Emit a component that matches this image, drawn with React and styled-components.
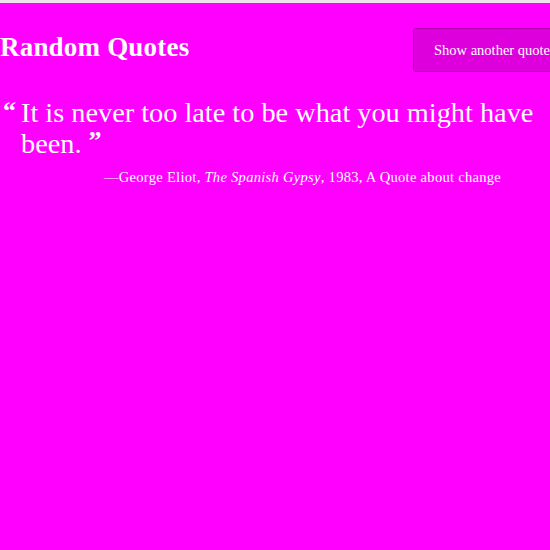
import React from 'react';
import styled, { createGlobalStyle } from 'styled-components';

const GlobalStyle = createGlobalStyle`
  html, body {
    margin: 0;
    padding: 0;
    background: #ff00ff;
    overflow: hidden;
  }
  body {
    font-family: "Liberation Serif", "DejaVu Serif", serif;
    color: #fff;
  }
`;

const TopStrip = styled.div`
  height: 3px;
  background: #ece4ec;
`;

const Page = styled.main`
  width: 571px;
  height: 547px;
  background: #ff00ff;
`;

const Header = styled.header`
  display: flex;
  justify-content: space-between;
  align-items: center;
  padding-top: 25px;
`;

const Title = styled.h1`
  margin: 0 0 6px;
  font-size: 27px;
  font-weight: 700;
  color: #fff;
  letter-spacing: 0.2px;
`;

const Button = styled.button`
  height: 44px;
  padding: 0 20px;
  background: #dd00dd;
  border: 1px solid #b300b3;
  border-radius: 3px;
  color: #fff;
  font-family: inherit;
  font-size: 14.5px;
  cursor: pointer;
`;

const Quote = styled.blockquote`
  margin: 25px 0 0;
  padding-left: 21px;
  position: relative;
  font-size: 28.3px;
  line-height: 31px;
  color: #fff;
`;

const Mark = styled.span`
  font-weight: 700;
  font-size: 26px;
  line-height: 1;
  ${(p) => p.open && `
    position: absolute;
    left: 3px;
    top: 1px;
  `}
  ${(p) => !p.open && `
    position: relative;
    top: -4px;
    margin-left: 7px;
  `}
`;

const Cite = styled.p`
  margin: 10px 0 0;
  padding-left: 104px;
  font-size: 14.5px;
  letter-spacing: 0.3px;
  color: #fff;

  cite {
    font-style: italic;
  }
`;

export default function App() {
  return (
    <>
      <GlobalStyle />
      <TopStrip />
      <Page>
        <Header>
          <Title>Random Quotes</Title>
          <Button>Show another quote</Button>
        </Header>
        <Quote>
          <Mark open>“</Mark>
          It is never too late to be what you might have been.
          <Mark>”</Mark>
        </Quote>
        <Cite>
          —George Eliot, <cite>The Spanish Gypsy</cite>, 1983, A Quote about change
        </Cite>
      </Page>
    </>
  );
}
